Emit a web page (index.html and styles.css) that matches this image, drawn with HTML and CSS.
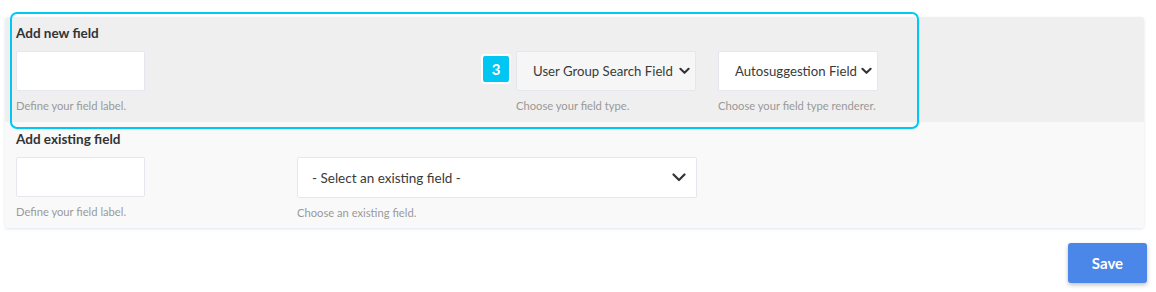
FILE: index.html
```html
<!DOCTYPE html>
<html lang="en">
<head>
<meta charset="utf-8">
<title>Fields</title>
<link rel="stylesheet" href="styles.css">
</head>
<body>
<div class="page">
  <div class="panel">
    <section class="section section-new">
      <h3 class="title">Add new field</h3>
      <div class="row">
        <div class="field field-label">
          <div class="input"></div>
          <div class="help">Define your field label.</div>
        </div>
        <div class="field field-type">
          <span class="badge">3</span>
          <div class="select select-muted">
            <span>User Group Search Field</span>
            <svg class="chev" viewBox="0 0 12 8" width="11" height="8"><polyline points="1.5,1.5 6,6 10.5,1.5" fill="none" stroke="#333" stroke-width="2.2" stroke-linecap="round" stroke-linejoin="round"/></svg>
          </div>
          <div class="help">Choose your field type.</div>
        </div>
        <div class="field field-renderer">
          <div class="select">
            <span>Autosuggestion Field</span>
            <svg class="chev" viewBox="0 0 12 8" width="11" height="8"><polyline points="1.5,1.5 6,6 10.5,1.5" fill="none" stroke="#333" stroke-width="2.2" stroke-linecap="round" stroke-linejoin="round"/></svg>
          </div>
          <div class="help">Choose your field type renderer.</div>
        </div>
      </div>
    </section>
    <section class="section section-existing">
      <h3 class="title">Add existing field</h3>
      <div class="row">
        <div class="field field-label">
          <div class="input"></div>
          <div class="help">Define your field label.</div>
        </div>
        <div class="field field-existing">
          <div class="select select-wide">
            <span>- Select an existing field -</span>
            <svg class="chev" viewBox="0 0 14 9" width="14" height="9"><polyline points="1.5,1.5 7,7 12.5,1.5" fill="none" stroke="#333" stroke-width="2.2" stroke-linecap="round" stroke-linejoin="round"/></svg>
          </div>
          <div class="help">Choose an existing field.</div>
        </div>
      </div>
    </section>
  </div>
  <div class="actions">
    <button class="save">Save</button>
  </div>
  <div class="highlight"></div>
</div>
</body>
</html>
```

FILE: styles.css
```css
* { box-sizing: border-box; }
html, body { margin: 0; padding: 0; background: #fff; }
body {
  font-family: Lato, "Open Sans", "Liberation Sans", sans-serif;
  color: #333;
  width: 1156px;
  height: 292px;
  overflow: hidden;
}
.page {
  position: relative;
  padding: 17px 12px 0 5px;
}
.panel {
  border-radius: 3px;
  overflow: hidden;
  box-shadow: 0 1px 3px rgba(160, 180, 210, 0.35);
}
.section {
  padding: 7px 11px 7px 11px;
}
.section-new { background: #efefef; height: 105px; }
.section-existing { background: #f9f9f9; padding-top: 8px; padding-bottom: 8px; height: 106px; }
.title {
  margin: 0;
  font-size: 13.5px;
  font-weight: 700;
  line-height: 18px;
  color: #333;
}
.row {
  display: flex;
  align-items: flex-start;
  margin-top: 9px;
}
.field { position: relative; }
.field-label { width: 129px; }
.field-type { width: 180px; margin-left: 371px; }
.field-renderer { width: 160px; margin-left: 22px; }
.field-existing { width: 400px; margin-left: 152px; }
.input {
  height: 40px;
  background: #fff;
  border: 1px solid #e4e8ee;
  border-radius: 2px;
}
.select {
  height: 40px;
  background: #fff;
  border: 1px solid #e4e8ee;
  border-radius: 2px;
  display: flex;
  align-items: center;
  justify-content: space-between;
  gap: 3px;
  padding: 0 5px 0 16px;
  font-size: 13.2px;
  color: #3a3a3a;
  white-space: nowrap;
}
.select-muted { background: #f6f6f6; }
.select-wide { padding: 0 10px 0 14px; height: 41px; font-size: 13.5px; }
.chev { flex: none; }
.help {
  margin-top: 7px;
  font-size: 11.2px;
  line-height: 16px;
  color: #999;
  white-space: nowrap;
}
.badge {
  position: absolute;
  left: -35px;
  top: 3px;
  width: 30px;
  height: 30px;
  border: 2px solid #fff;
  border-radius: 4px;
  background: #00c6f4;
  color: #fff;
  font-size: 15px;
  font-weight: 700;
  display: flex;
  align-items: center;
  justify-content: center;
}
.actions {
  display: flex;
  justify-content: flex-end;
  margin: 15px -3px 0 0;
}
.save {
  width: 79px;
  height: 40px;
  border: none;
  border-radius: 3px;
  background: #4a87e8;
  color: #fff;
  font-family: Lato, "Open Sans", "Liberation Sans", sans-serif;
  font-size: 15px;
  font-weight: 700;
  box-shadow: 0 2px 4px rgba(0, 0, 0, 0.25);
  padding: 0;
}
.highlight {
  position: absolute;
  left: 10px;
  top: 12px;
  width: 909px;
  height: 117px;
  border: 2px solid #00c8f4;
  border-radius: 7px;
  pointer-events: none;
}
```
